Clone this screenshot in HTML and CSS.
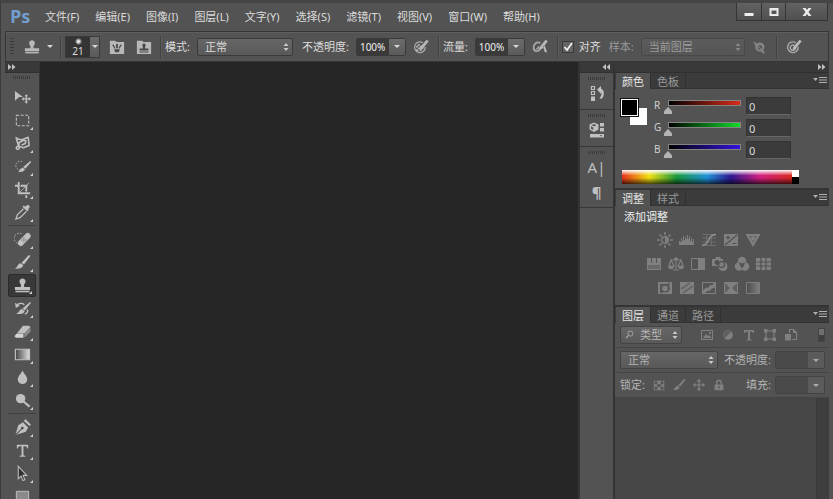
FILE: index.html
```
<!DOCTYPE html>
<html lang="zh-CN">
<head>
    <meta charset="UTF-8">
    <meta name="viewport" content="width=device-width, initial-scale=1.0">
    <title>Ps</title>
    <link rel="stylesheet" href="styles.css">
</head>
<body>
    <!-- shared icons -->
    <svg class="sprite" aria-hidden="true">
        <symbol id="stamp" viewBox="0 0 18 18">
            <path d="M9 1.500a3.200 3.200 0 0 1 2.400 5.400c-.8 1-.9 1.800-.6 3.600H17v3.200H1v-3.200h6.200c.3-1.800.2-2.600-.6-3.600A3.200 3.200 0 0 1 9 1.500z"/>
            <path d="M1.500 14.500h15v1.700h-15z"/>
        </symbol>
        <symbol id="brush" viewBox="0 0 18 18">
            <path d="M16.800 1.500c.5.400.4.900 0 1.400L10.500 11 8 9.200l7.200-7.500c.5-.5 1.100-.6 1.600-.2zM7.300 9.900l2.400 1.900c-.3 2.600-3.600 4-8.700 3.700 2.800-.9 2.800-5.300 6.300-5.600z"/>
        </symbol>
        <symbol id="move" viewBox="0 0 18 18">
            <path d="M9 1l3 3.500h-2.200v3.700h3.700V6L17 9l-3.500 3V9.800H9.800v3.700H12L9 17l-3-3.500h2.200V9.800H4.500V12L1 9l3.500-3v2.200h3.700V4.500H6z"/>
        </symbol>
        <symbol id="menu" viewBox="0 0 14 9">
            <path d="M0 2h5L2.500 5zM6 1h8v1H6zM6 3.500h8v1H6zM6 6h8v1H6z"/>
        </symbol>
        <symbol id="chevrons" viewBox="0 0 8 6">
            <path d="M0 0l3.500 3L0 6zM4 0l3.500 3L4 6z"/>
        </symbol>
    </svg>

    <div class="app">
        <header class="menubar">
            <span class="logo">Ps</span>
            <nav class="menus">
                <button class="menu">文件(F)</button>
                <button class="menu">编辑(E)</button>
                <button class="menu">图像(I)</button>
                <button class="menu">图层(L)</button>
                <button class="menu">文字(Y)</button>
                <button class="menu">选择(S)</button>
                <button class="menu">滤镜(T)</button>
                <button class="menu">视图(V)</button>
                <button class="menu">窗口(W)</button>
                <button class="menu">帮助(H)</button>
            </nav>
            <div class="window-buttons">
                <button class="win-btn" aria-label="最小化"><svg viewBox="0 0 12 12"><path d="M1.500 7h9v3h-9z"/></svg></button>
                <button class="win-btn" aria-label="最大化"><svg viewBox="0 0 12 12"><path fill-rule="evenodd" d="M1.500 2h9v8h-9zM3.500 4.500v3.500h5V4.500z"/></svg></button>
                <button class="win-btn close" aria-label="关闭"><svg viewBox="0 0 12 12"><path d="M1.500 2h3L6 4l1.500-2h3l-3 4 3 4h-3L6 8l-1.500 2h-3l3-4z"/></svg></button>
            </div>
        </header>

        <div class="options">
            <span class="grip-v"></span>
            <button class="opt-btn preset" aria-label="仿制图章">
                <svg class="icon"><use href="#stamp"/></svg>
                <span class="caret"></span>
            </button>
            <span class="divider"></span>
            <button class="brush-picker" aria-label="画笔">
                <span class="brush-preview"><span class="brush-dot"></span>21</span>
                <span class="drop"></span>
            </button>
            <button class="opt-btn" aria-label="画笔面板">
                <svg class="icon" viewBox="0 0 18 18"><path d="M1 2h6l1.500 1.500H17V17H1z"/><path class="ink" d="M3.500 6.500h2l1.800 4.200H6zM8 5.500h2v5H8zM12.500 6.500h2L12 10.700h-1.300zM6 11.500h6v1L11 15H7l-1-2.500z"/></svg>
            </button>
            <button class="opt-btn" aria-label="仿制源面板">
                <svg class="icon" viewBox="0 0 18 18"><path d="M1 2h6l1.500 1.500H17V17H1z"/><path class="ink" d="M9 5a2 2 0 0 1 1.300 3.400v2.300H14V13H4v-2.300h3.700V8.400A2 2 0 0 1 9 5zM4 14h10v1.200H4z"/></svg>
            </button>
            <span class="divider"></span>
            <label class="opt-label" for="mode">模式:</label>
            <select class="select mode" id="mode"><option>正常</option></select>
            <label class="opt-label opacity-label" for="opacity">不透明度:</label>
            <div class="combo">
                <input class="combo-input" id="opacity" type="text" value="100%">
                <button class="drop" aria-label="不透明度滑块"></button>
            </div>
            <button class="opt-btn" aria-label="不透明度压力">
                <svg class="icon" viewBox="0 0 18 18"><path fill="none" stroke="#a8a8a8" stroke-width="1.500" d="M11 4.200A6 6 0 1 0 13.800 9"/><path d="M3.500 7.500h2v2h-2zM5.500 9.500h2v2h-2zM7.500 11.500h2v2h-2zM5.500 5.500h2v2h-2zM3.500 11.500h2v2h-2zM7.500 7.500h2v2h-2zM9.500 9.500h2v2h-2z"/><path d="M15.300.8l2.400 1.800-7 8.600-3.400 1.300.8-3.600z"/></svg>
            </button>
            <span class="divider"></span>
            <label class="opt-label" for="flow">流量:</label>
            <div class="combo">
                <input class="combo-input" id="flow" type="text" value="100%">
                <button class="drop" aria-label="流量滑块"></button>
            </div>
            <button class="opt-btn" aria-label="喷枪">
                <svg class="icon" viewBox="0 0 18 18"><path fill="none" stroke="#a8a8a8" stroke-width="2" d="M9.500 4.500C5 2.500 1.500 6 1.800 10c.2 4 4.700 5 7.200 1.500l4-5M5 10.500c1 1 2-.5 3-2"/><path d="M15.300.8l2.400 1.800-6 8-4 2.400 1.300-4.500zM12 8l2.500 7h2.500l-2.500-7z"/></svg>
            </button>
            <span class="divider"></span>
            <input class="check" type="checkbox" id="aligned" checked>
            <label class="opt-label check-label" for="aligned">对齐</label>
            <label class="opt-label dim" for="sample">样本:</label>
            <select class="select sample" id="sample" disabled><option>当前图层</option></select>
            <button class="opt-btn faded" aria-label="忽略调整图层">
                <svg class="icon" viewBox="0 0 18 18"><path fill-rule="evenodd" d="M3 4l4 1a5 5 0 0 1 8 5l-1.500 3 2 2.500-1.500 1-3-2.500a5 5 0 0 1-6-6zM10 7a2.500 2.500 0 1 0 .1 5A2.500 2.500 0 0 0 10 7z"/><path stroke="#a8a8a8" stroke-width="1.300" d="M3 3l12 12"/></svg>
            </button>
            <span class="divider"></span>
            <button class="opt-btn" aria-label="大小压力">
                <svg class="icon" viewBox="0 0 18 18"><path fill="none" stroke="#a8a8a8" stroke-width="1.600" d="M11 4.200A6 6 0 1 0 13.800 9M9.500 7.300A3 3 0 1 0 10.800 10"/><path d="M15.300.8l2.400 1.800-7 8.600-3.400 1.300.8-3.600z"/></svg>
            </button>
        </div>

        <main class="workspace">
            <aside class="toolbar">
                <div class="dock-head"><svg class="chev"><use href="#chevrons"/></svg></div>
                <span class="grip-h"></span>
                <div class="tool-group">
                    <button class="tool single" aria-label="移动"><svg class="icon" viewBox="0 0 18 18"><path d="M1 2l8.500 6.500H5.500L1 12.500z"/><path d="M13 5.500l2 2.300h-1.300v2.100h2V8.500l2.300 2-2.300 2v-1.400h-2v2.100H15l-2 2.300-2-2.300h1.300v-2.100h-2v1.400l-2.300-2 2.300-2v1.400h2V7.800H11z"/></svg></button>
                    <button class="tool" aria-label="矩形选框"><svg class="icon" viewBox="0 0 18 18"><path fill="none" stroke="#c0c0c0" stroke-width="1.200" stroke-dasharray="3 1.700" d="M2.500 3.500h13v11h-13z"/></svg></button>
                    <button class="tool" aria-label="套索"><svg class="icon" viewBox="0 0 18 18"><path fill="none" stroke="#c0c0c0" stroke-width="1.700" stroke-linejoin="round" d="M1.500 2.500l3.500 2 3.500.5 6.500-2.500 1 8.500-6 2.500-5-1.500L2.500 4M5 12l.5-4 4.500-2.500 2.500.5-.5 3-4 1.500M5 12c-2.500-.5-3.500 2.500-1.500 3s2.500-1.500 1.500-3"/></svg></button>
                    <button class="tool" aria-label="快速选择"><svg class="icon" viewBox="0 0 18 18"><path fill="none" stroke="#c0c0c0" stroke-dasharray="1.500 1.500" d="M8.500 4a4.500 4.500 0 1 0-2 8.500"/><path d="M17.500 3l.5 1.500-6 7L9.800 9.500zM9 10l2.500 2c-.5 2.300-3 3.300-7.500 2.800 2-.6 2.500-4 5-4.800z"/></svg></button>
                    <button class="tool" aria-label="裁剪"><svg class="icon" viewBox="0 0 18 18"><path d="M4 1h2v11h11v2H4V6H1V4h3zM7 4h7v7h-2V6H7zM12 15h2v3h-2z"/><path fill="none" stroke="#c0c0c0" stroke-width=".8" d="M6 12L16 2"/></svg></button>
                    <button class="tool" aria-label="吸管"><svg class="icon" viewBox="0 0 18 18"><path d="M12 3c1.500-2 3-2.300 4-1.300s.7 2.500-1.200 4l.7.900-1.500 1.400-5-5 1.500-1.400z"/><path fill="none" stroke="#c0c0c0" stroke-width="1.300" d="M10 5l-6.500 6.500L2 16l4.500-1.500L13 8"/></svg></button>
                </div>
                <div class="tool-group">
                    <button class="tool" aria-label="修复画笔"><svg class="icon" viewBox="0 0 18 18"><path fill="none" stroke="#c0c0c0" stroke-dasharray="1.500 1.500" d="M8 2.800A5.500 5.500 0 1 0 3.500 13"/><path d="M12.500 3a3 3 0 0 1 4.200 4.300L9.200 15A3 3 0 0 1 5 10.700z"/><path class="ink" d="M10 7h1v1h-1zM12 9h1v1h-1zM8 9h1v1H8zM10 11h1v1h-1zM10 9h1v1h-1z"/></svg></button>
                    <button class="tool" aria-label="画笔"><svg class="icon"><use href="#brush"/></svg></button>
                    <button class="tool active" aria-label="仿制图章"><svg class="icon"><use href="#stamp"/></svg></button>
                    <button class="tool" aria-label="历史记录画笔"><svg class="icon" viewBox="0 0 18 18"><path d="M17 2l1 1-6.500 8L9 9zM8.500 9.500l2.800 2.300c-.5 2.500-4 3.500-9.300 3 3-.8 3.500-4.800 6.500-5.300z"/><path fill="none" stroke="#c0c0c0" stroke-width="1.500" d="M3 5.500c2-2 5.500-2.500 8-.5M14 10c1 1 .5 4-2.500 5"/><path d="M1 3l1 5.500L6 6z"/></svg></button>
                    <button class="tool" aria-label="橡皮擦"><svg class="icon" viewBox="0 0 18 18"><path d="M9.500 3H16l1.500 1.500-6.500 6.500H3z"/><path fill="#8e8e8e" d="M17.500 5v4L11 15.500v-4z"/><path fill="#d4d4d4" d="M2.500 11.500H10v4H2l-1.500-1.500z"/></svg></button>
                    <button class="tool" aria-label="渐变"><svg class="icon" viewBox="0 0 18 18"><defs><linearGradient id="grad"><stop stop-color="#444"/><stop offset="1" stop-color="#e0e0e0"/></linearGradient></defs><path fill="url(#grad)" stroke="#c0c0c0" stroke-width="1.200" d="M1.500 3.500h15v11h-15z"/></svg></button>
                    <button class="tool" aria-label="模糊"><svg class="icon" viewBox="0 0 18 18"><path d="M9 1.500c1 3 5 5.700 5 9.500a5 5 0 0 1-10 0c0-3.800 4-6.500 5-9.500z"/></svg></button>
                    <button class="tool" aria-label="减淡"><svg class="icon" viewBox="0 0 18 18"><circle cx="7" cy="7" r="5"/><path stroke="#c0c0c0" stroke-width="2.200" d="M9.500 9.500L16.500 15.500"/></svg></button>
                </div>
                <div class="tool-group">
                    <button class="tool" aria-label="钢笔"><svg class="icon" viewBox="0 0 18 18"><path d="M12 0l6 6-1.600 1.500L10.500 2z"/><path d="M9.500 3.500l5.500 5.500-2.500 4.500L1.500 17l3-10.500z"/><path fill="none" stroke="#535353" stroke-width="1.100" d="M1.500 17l6.500-6.500"/><circle class="ink" cx="8.800" cy="9.600" r="1.400"/></svg></button>
                    <button class="tool" aria-label="文字"><svg class="icon" viewBox="0 0 18 18"><path d="M3 3h12v4h-1c0-2-1-2.500-4-2.500v9c0 1 .5 1 2 1v1H6v-1c1.500 0 2 0 2-1v-9c-3 0-4 .5-4 2.500H3z"/></svg></button>
                    <button class="tool" aria-label="路径选择"><svg class="icon" viewBox="0 0 18 18"><path fill="#303030" stroke="#c0c0c0" stroke-width="1.100" d="M4.500 1.500v13l3-2.800 2 4.800 2-1-2-4.500h4z"/></svg></button>
                    <button class="tool" aria-label="矩形"><svg class="icon" viewBox="0 0 18 18"><path fill="#8a8a8a" stroke="#c0c0c0" d="M2.500 3.500h13v10h-13z"/></svg></button>
                </div>
            </aside>

            <section class="canvas"></section>

            <aside class="dock">
                <div class="dock-head end"><svg class="chev flip"><use href="#chevrons"/></svg></div>
                <div class="dock-group">
                    <span class="grip-h"></span>
                    <button class="dock-btn" aria-label="历史记录"><svg class="icon" viewBox="0 0 18 18"><path fill="none" stroke="#c0c0c0" stroke-width="1.200" d="M3.500 2.500h3v3h-3zM3.500 7.500h3v3h-3z"/><path d="M3 12.500h4V17H3zM9 5.500L13 2v2.500c4 2 3.500 7.500.5 10.500l-2-1c2-2 2.500-4.500 1.500-6v2z"/></svg></button>
                </div>
                <div class="dock-group">
                    <span class="grip-h"></span>
                    <button class="dock-btn" aria-label="属性"><svg class="icon" viewBox="0 0 18 18"><path fill-rule="evenodd" d="M6 1.500l4.500 2v5L6 11 1.500 8.500v-5zM6 3L3.500 4.200 6 5.300l2.500-1.100zM3 5.300v2.400l2.300 1.200V6.400z"/><path d="M12 2h4v3.500h-4zM12 7h4v3.500h-4zM2 13h14v3.500H2z"/><path class="ink" d="M12 14h2l-1 1.500z"/></svg></button>
                </div>
                <div class="dock-group">
                    <span class="grip-h"></span>
                    <button class="dock-btn char" aria-label="字符">A|</button>
                    <button class="dock-btn para" aria-label="段落">¶</button>
                </div>
            </aside>

            <aside class="panels">
                <div class="dock-head end"><svg class="chev"><use href="#chevrons"/></svg></div>

                <section class="panel color">
                    <div class="tabs">
                        <button class="tab active">颜色</button>
                        <button class="tab">色板</button>
                        <button class="panel-menu" aria-label="面板菜单"><svg><use href="#menu"/></svg></button>
                    </div>
                    <div class="color-body">
                        <div class="swatches">
                            <button class="swatch back" aria-label="背景色"></button>
                            <button class="swatch front" aria-label="前景色"></button>
                        </div>
                        <div class="channels">
                            <div class="channel">
                                <label for="red">R</label>
                                <input class="slider red" type="range" max="255" value="0" aria-label="R">
                                <input class="value" id="red" type="text" value="0">
                            </div>
                            <div class="channel">
                                <label for="green">G</label>
                                <input class="slider green" type="range" max="255" value="0" aria-label="G">
                                <input class="value" id="green" type="text" value="0">
                            </div>
                            <div class="channel">
                                <label for="blue">B</label>
                                <input class="slider blue" type="range" max="255" value="0" aria-label="B">
                                <input class="value" id="blue" type="text" value="0">
                            </div>
                        </div>
                    </div>
                    <div class="ramp"><span class="spectrum"></span><span class="mono"></span></div>
                </section>

                <section class="panel adjust">
                    <div class="tabs">
                        <button class="tab active">调整</button>
                        <button class="tab">样式</button>
                        <button class="panel-menu" aria-label="面板菜单"><svg><use href="#menu"/></svg></button>
                    </div>
                    <p class="adjust-title">添加调整</p>
                    <div class="adjust-row">
                        <button class="mini" aria-label="亮度/对比度"><svg viewBox="0 0 16 16"><circle cx="8" cy="8" r="3.300" fill="none" stroke="#808080" stroke-width="1.400"/><path d="M8 5v6a3 3 0 0 0 0-6z"/><path stroke="#808080" stroke-width="1.500" d="M8 0v3M8 13v3M0 8h3M13 8h3M2.500 2.500l2 2M11.500 11.500l2 2M2.500 13.500l2-2M11.500 4.500l2-2"/></svg></button>
                        <button class="mini" aria-label="色阶"><svg viewBox="0 0 16 16"><path d="M0 13V9h1v1h1V6h1v3h1V4h1v4h1V5h1v2h1V3h1v4h1V4h1v5h1V6h1v4h1V7h1v6z"/></svg></button>
                        <button class="mini" aria-label="曲线"><svg viewBox="0 0 16 16"><path fill="none" stroke="#747474" stroke-width=".8" d="M1 2.500h14M1 6h14M1 10h14M1 13.500h14M5.500 2v12M10.500 2v12"/><path fill="none" stroke="#929292" stroke-width="1.500" d="M1 13.500c8 0 5-11 14-11"/></svg></button>
                        <button class="mini" aria-label="曝光度"><svg viewBox="0 0 16 16"><path d="M1 2h14v12H1z"/><path class="cut" fill="none" d="M2 13L14 3M3 5.500h4M5 3.500v4M9.500 11.500h4"/></svg></button>
                        <button class="mini" aria-label="自然饱和度"><svg viewBox="0 0 16 16"><path d="M.5 2h15L8 15z"/><path fill="#686868" d="M4 4h8l-4 7z"/><circle cx="8" cy="6.500" r="2"/></svg></button>
                    </div>
                    <div class="adjust-row">
                        <button class="mini" aria-label="色相/饱和度"><svg viewBox="0 0 16 16"><path d="M1 2h4v5h1V2h4v5h1V2h4v12H1z"/><path fill="#6a6a6a" d="M2 9h12v4H2z"/></svg></button>
                        <button class="mini" aria-label="色彩平衡"><svg viewBox="0 0 16 16"><path fill="none" stroke="#808080" stroke-width="1.200" d="M8 1v13M3 4h10M3 4L1 10h5zM13 4l-3 6h5zM5 14h6"/><path d="M0 10h6l-1 3H1zM10 10h6l-1 3h-4zM6 2h4v2H6z"/></svg></button>
                        <button class="mini" aria-label="黑白"><svg viewBox="0 0 16 16"><path fill="none" stroke="#808080" d="M1.500 2.500h13v11h-13z"/><path d="M8 2h7v12H8z"/></svg></button>
                        <button class="mini" aria-label="照片滤镜"><svg viewBox="0 0 16 16"><path fill-rule="evenodd" d="M0 3h3l1-2h4l1 2h2v2a5 5 0 0 0-4 5H0zM5 4a2.500 2.500 0 1 0 .1 5A2.500 2.500 0 0 0 5 4z"/><circle cx="11" cy="10.500" r="4.500"/><circle class="cut" fill="none" cx="9.500" cy="8.500" r="3"/></svg></button>
                        <button class="mini" aria-label="通道混合器"><svg viewBox="0 0 16 16"><circle cx="8" cy="5" r="4.200"/><circle cx="5" cy="10.500" r="4.200"/><circle cx="11" cy="10.500" r="4.200"/><path fill="#535353" d="M5 6.500l3 1 3-1-1 3-2 3-2-3z"/></svg></button>
                        <button class="mini" aria-label="颜色查找"><svg viewBox="0 0 16 16"><path d="M0 2h15v12H0z"/><path class="cut" d="M5 2v12M10 2v12M1 6h14M1 10h14"/></svg></button>
                    </div>
                    <div class="adjust-row">
                        <button class="mini" aria-label="反相"><svg viewBox="0 0 16 16"><path d="M1 2h14v12H1z"/><path fill="#555" d="M3 4h7l3-1.500L12 6a4 4 0 0 1-5 6l-2 1H3z"/><circle cx="8" cy="8.500" r="2.800"/></svg></button>
                        <button class="mini" aria-label="色调分离"><svg viewBox="0 0 16 16"><path d="M1 2h14v12H1z"/><path fill="none" stroke="#666" stroke-width="2" d="M2 9l9-6M4 13l10-7"/></svg></button>
                        <button class="mini" aria-label="阈值"><svg viewBox="0 0 16 16"><path d="M1 2h14v12H1z"/><path fill="#555" d="M2 3h11l-2 2.500-2-.5-2 3-2-.5-3 3zM14 7v6H4l3-2.500 2 .5 2-3 1 .5z"/></svg></button>
                        <button class="mini" aria-label="可选颜色"><svg viewBox="0 0 16 16"><path d="M1 2h14v12H1z"/><path fill="#606060" d="M2 3l5 5-5 5zM14 3L9 8l5 5z"/></svg></button>
                        <button class="mini" aria-label="渐变映射"><svg viewBox="0 0 16 16"><defs><linearGradient id="map"><stop stop-color="#4c4c4c"/><stop offset="1" stop-color="#808080"/></linearGradient></defs><path fill="url(#map)" stroke="#7c7c7c" d="M1.500 2.500h13v11h-13z"/></svg></button>
                    </div>
                </section>

                <section class="panel layers">
                    <div class="tabs">
                        <button class="tab active">图层</button>
                        <button class="tab">通道</button>
                        <button class="tab">路径</button>
                        <button class="panel-menu" aria-label="面板菜单"><svg><use href="#menu"/></svg></button>
                    </div>
                    <div class="layer-row">
                        <div class="filter">
                            <svg class="search" viewBox="0 0 10 10"><circle cx="6" cy="4" r="2.800" fill="none" stroke="#aaa"/><path stroke="#aaa" stroke-width="1.300" d="M4 6L1 9"/></svg>
                            <select class="select kind" aria-label="过滤类型"><option>类型</option></select>
                        </div>
                        <div class="filter-icons">
                            <button class="mini" aria-label="像素图层"><svg viewBox="0 0 16 16"><path fill-rule="evenodd" d="M2 3h12v10H2zM3 4v8h10V4z"/><path d="M4 11l3-4 2 2 1-1 3 3zM10 5h2v2h-2z"/></svg></button>
                            <button class="mini" aria-label="调整图层"><svg viewBox="0 0 16 16"><circle cx="8" cy="8" r="4.800"/><path fill="#606060" d="M4.800 11.200a4.500 4.500 0 0 1 6.400-6.400z"/></svg></button>
                            <button class="mini" aria-label="文字图层"><svg viewBox="0 0 16 16"><path d="M3 3h10v3h-1c0-1-.5-1.500-3-1.500v7c0 1 .5 1 1.500 1v1h-5v-1c1 0 1.500 0 1.500-1v-7C4.500 4.500 4 5 4 6H3z"/></svg></button>
                            <button class="mini" aria-label="形状图层"><svg viewBox="0 0 16 16"><path fill="none" stroke="#808080" stroke-width="1.200" d="M4 4h8v8H4z"/><path d="M2 2h3.500v3.500H2zM10.500 2H14v3.500h-3.500zM2 10.500h3.500V14H2zM10.500 10.500H14V14h-3.500z"/></svg></button>
                            <button class="mini" aria-label="智能对象"><svg viewBox="0 0 16 16"><path fill="none" stroke="#808080" stroke-width="1.200" d="M6.500 6V2.500h4l3 3v7H9"/><path d="M2 7h6v6.500H2zM10 2v4h4z"/></svg></button>
                        </div>
                        <button class="toggle" aria-label="过滤开关"></button>
                    </div>
                    <div class="layer-row">
                        <select class="select blend" aria-label="混合模式"><option>正常</option></select>
                        <label class="row-label" for="layer-opacity">不透明度:</label>
                        <div class="combo dim">
                            <input class="combo-input" id="layer-opacity" type="text">
                            <button class="drop" aria-label="不透明度滑块"></button>
                        </div>
                    </div>
                    <div class="layer-row">
                        <span class="lock-label">锁定:</span>
                        <div class="locks">
                            <button class="mini" aria-label="锁定透明像素"><svg viewBox="0 0 16 16"><path fill-rule="evenodd" d="M2 3h12v11H2zM3 4v3h3V4zM10 4v3h3V4zM6 7v3h4V7zM3 10v3h3v-3zM10 10v3h3v-3z"/></svg></button>
                            <button class="mini" aria-label="锁定图像像素"><svg><use href="#brush"/></svg></button>
                            <button class="mini" aria-label="锁定位置"><svg><use href="#move"/></svg></button>
                            <button class="mini" aria-label="锁定全部"><svg viewBox="0 0 16 16"><path fill="none" stroke="#808080" stroke-width="1.600" d="M5.300 8V5.500a2.700 2.700 0 0 1 5.400 0V8"/><path d="M3 7.500h10V14H3z"/><path fill="#535353" d="M7.300 9.500h1.400v2.500H7.300z"/></svg></button>
                        </div>
                        <label class="row-label" for="fill">填充:</label>
                        <div class="combo dim">
                            <input class="combo-input" id="fill" type="text">
                            <button class="drop" aria-label="填充滑块"></button>
                        </div>
                    </div>
                    <div class="layer-list"><span class="scroll-track"></span></div>
                </section>
            </aside>
        </main>
    </div>
</body>
</html>
```

FILE: styles.css
```
* {
    margin: 0;
    padding: 0;
    box-sizing: border-box;
}

body {
    font-family: "Noto Sans", "Noto Sans CJK SC", sans-serif;
    font-size: 11px;
    line-height: 16px;
    color: #dcdcdc;
    background: #535353;
    overflow: hidden;
}

button,
input,
select {
    font: inherit;
    color: inherit;
    background: none;
    border: none;
    border-radius: 0;
    outline: none;
    appearance: none;
}

svg {
    display: block;
}

.sprite {
    display: none;
}

.app {
    display: flex;
    flex-direction: column;
    height: 100vh;
    border-top: 3px solid #454545;
    border-left: 1px solid #3c3c3c;
}

.icon {
    width: 18px;
    height: 18px;
    fill: #c0c0c0;
    flex-shrink: 0;
}

.ink {
    fill: #484848;
}

/* menu bar */
.menubar {
    display: flex;
    align-items: flex-start;
    height: 28px;
    padding: 0 5px 0 9px;
    flex-shrink: 0;
}

.logo {
    width: 35px;
    font-family: "Open Sans", sans-serif;
    font-size: 18px;
    font-weight: bold;
    line-height: 26px;
    color: #729dcf;
}

.menus {
    display: flex;
    gap: 16px;
    padding-top: 6px;
}

.menu {
    white-space: nowrap;
}

.window-buttons {
    display: flex;
    margin-left: auto;
    border: 1px solid #343434;
    border-top: none;
}

.win-btn {
    display: flex;
    align-items: center;
    justify-content: center;
    width: 24px;
    height: 17px;
    background: linear-gradient(#626262, #505050);
    border-left: 1px solid #343434;
}

.win-btn:first-child {
    border-left: none;
}

.win-btn.close {
    width: 42px;
}

.win-btn svg {
    width: 12px;
    height: 12px;
    fill: #ececec;
}

/* options bar */
.options {
    display: flex;
    align-items: center;
    height: 31px;
    margin: 0 4px;
    padding-left: 4px;
    background: #535353;
    border: 1px solid #363636;
    box-shadow: inset 0 1px #5f5f5f;
    flex-shrink: 0;
}

.grip-v {
    width: 4px;
    height: 18px;
    margin-right: 10px;
    background: repeating-linear-gradient(#3b3b3b 0 1px, transparent 1px 3px);
}

.opt-btn {
    display: flex;
    align-items: center;
    justify-content: center;
    width: 27px;
    height: 20px;
}

.opt-btn .icon {
    width: 16px;
    height: 16px;
    fill: #b8b8b8;
}

.opt-btn.preset {
    width: 33px;
    justify-content: flex-start;
    gap: 7px;
}

.opt-btn.faded {
    opacity: 0.5;
    width: 28px;
}

.caret {
    border: 3px solid transparent;
    border-top-color: #d8d8d8;
    border-bottom: none;
}

.divider {
    width: 2px;
    height: 22px;
    margin: 0 3px;
    border-left: 1px solid #434343;
    border-right: 1px solid #5c5c5c;
}

.brush-picker {
    display: flex;
    width: 35px;
    height: 22px;
    margin-right: 3px;
    border: 1px solid #3a3a3a;
}

.brush-preview {
    display: flex;
    flex-direction: column;
    align-items: center;
    width: 24px;
    padding-top: 1px;
    background: #343434;
    font-size: 10px;
    line-height: 12px;
}

.brush-dot {
    width: 7px;
    height: 7px;
    border-radius: 50%;
    background: radial-gradient(#fff 10%, #343434 75%);
    flex-shrink: 0;
}

.brush-picker .drop {
    width: 9px;
}

.opt-label {
    white-space: nowrap;
    margin-right: 7px;
}

.opt-label.dim {
    color: #999;
}

.opacity-label {
    margin-left: 9px;
}

.select {
    height: 18px;
    padding: 0 16px 0 7px;
    line-height: 16px;
    border: 1px solid #3a3a3a;
    border-radius: 2px;
    background: url("data:image/svg+xml,%3Csvg xmlns='http://www.w3.org/2000/svg' width='6' height='8'%3E%3Cpath fill='%23c8c8c8' d='M3 0l2.500 3h-5zM3 8L.500 5h5z'/%3E%3C/svg%3E") no-repeat right 3px center, linear-gradient(#666, #595959);
}

.select:disabled {
    color: #9d9d9d;
    opacity: 1;
    border-color: #484848;
    background-image: url("data:image/svg+xml,%3Csvg xmlns='http://www.w3.org/2000/svg' width='6' height='8'%3E%3Cpath fill='%23888' d='M3 0l2.500 3h-5zM3 8L.500 5h5z'/%3E%3C/svg%3E"), linear-gradient(#5b5b5b, #555);
}

.select.mode {
    width: 96px;
}

.select.sample {
    width: 104px;
}

.combo {
    display: flex;
    width: 50px;
    height: 18px;
    margin-right: 2px;
    border: 1px solid #3a3a3a;
    border-radius: 2px;
    flex-shrink: 0;
}

.combo-input {
    flex: 1;
    min-width: 0;
    padding-left: 3px;
    font-size: 10px;
    background: #3a3a3a;
    color: #f0f0f0;
}

.drop {
    display: flex;
    align-items: center;
    justify-content: center;
    width: 16px;
    background: linear-gradient(#6c6c6c, #5a5a5a);
}

.drop::after {
    content: "";
    border: 3px solid transparent;
    border-top-color: #d8d8d8;
    border-bottom: none;
}

.combo.dim {
    margin-right: 0;
    border-color: #434343;
}

.combo.dim .combo-input {
    background: #4a4a4a;
}

.combo.dim .drop {
    background: #5b5b5b;
}

.combo.dim .drop::after {
    border-top-color: #aaa;
}

.check {
    width: 12px;
    height: 12px;
    border: 1px solid #383838;
    background: #646464;
}

.check:checked {
    background: url("data:image/svg+xml,%3Csvg xmlns='http://www.w3.org/2000/svg' viewBox='0 0 10 10'%3E%3Cpath fill='none' stroke='%23eee' stroke-width='1.800' d='M1.500 5l2.500 3L9 1'/%3E%3C/svg%3E") center / 10px no-repeat #646464;
}

.check-label {
    margin: 0 8px 0 5px;
}

/* workspace */
.workspace {
    display: flex;
    flex: 1;
    min-height: 0;
    margin: 0 4px;
    background: #343434;
}

.dock-head {
    display: flex;
    align-items: center;
    height: 11px;
    padding: 0 3px;
    background: #393939;
    border-bottom: 1px solid #303030;
    flex-shrink: 0;
}

.dock-head.end {
    justify-content: flex-end;
}

.chev {
    width: 8px;
    height: 6px;
    fill: #c0c0c0;
}

.chev.flip {
    transform: scaleX(-1);
}

.grip-h {
    display: block;
    width: 18px;
    height: 3px;
    background: repeating-linear-gradient(90deg, #3b3b3b 0 1px, transparent 1px 2px);
}

.toolbar {
    display: flex;
    flex-direction: column;
    align-items: center;
    width: 34px;
    margin-right: 1px;
    background: #535353;
    overflow: hidden;
}

.toolbar .dock-head {
    width: 100%;
}

.toolbar .grip-h {
    margin: 3px 0 6px;
    flex-shrink: 0;
}

.tool-group {
    padding: 2px 0 1px;
    border-top: 1px solid #424242;
    flex-shrink: 0;
}

.grip-h + .tool-group {
    padding-top: 0;
    border-top-color: transparent;
}

.tool {
    position: relative;
    display: flex;
    align-items: center;
    justify-content: center;
    width: 28px;
    height: 23px;
}

.tool .icon {
    width: 17px;
    height: 17px;
}

.tool::after {
    content: "";
    position: absolute;
    right: 3px;
    bottom: 2px;
    border-left: 3px solid transparent;
    border-bottom: 3px solid #d0d0d0;
}

.tool.single::after {
    display: none;
}

.tool.active {
    background: #383838;
    border: 1px solid #2c2c2c;
    border-radius: 2px;
}

.canvas {
    flex: 1;
    background: #262626;
}

.dock {
    display: flex;
    flex-direction: column;
    width: 33px;
    margin: 0 2px;
    background: #535353;
}

.dock-group {
    display: flex;
    flex-direction: column;
    align-items: center;
    padding: 4px 0 3px;
    border-bottom: 1px solid #383838;
}

.dock-btn {
    display: flex;
    align-items: center;
    justify-content: center;
    width: 28px;
    height: 26px;
    color: #c0c0c0;
}

.dock-btn.char {
    height: 25px;
    font-size: 15px;
}

.dock-btn.para {
    height: 25px;
    font-size: 15px;
    font-weight: bold;
}

/* panels */
.panels {
    display: flex;
    flex-direction: column;
    width: 214px;
    background: #343434;
}

.panel {
    display: flex;
    flex-direction: column;
    margin-bottom: 2px;
    background: #535353;
}

.tabs {
    display: flex;
    height: 16px;
    padding-left: 1px;
    background: #3b3b3b;
    border-bottom: 1px solid #333;
}

.tab {
    width: 35px;
    height: 16px;
    line-height: 15px;
    color: #999;
    border-right: 1px solid #303030;
}

.tab.active {
    background: #535353;
    color: #e6e6e6;
}

.panel-menu {
    margin-left: auto;
    padding-right: 2px;
}

.panel-menu svg {
    width: 14px;
    height: 9px;
    fill: #b0b0b0;
}

.color {
    height: 115px;
}

.color-body {
    display: flex;
    padding: 8px 0 0 6px;
}

.swatches {
    position: relative;
    width: 33px;
    height: 28px;
}

.swatch {
    position: absolute;
    width: 17px;
    height: 17px;
}

.swatch.back {
    top: 11px;
    left: 9px;
    background: #fff;
}

.swatch.front {
    top: 2px;
    left: 0;
    background: #000;
    border: 1px solid #fff;
    outline: 1px solid #111;
}

.channels {
    display: flex;
    flex-direction: column;
    gap: 4px;
}

.channel {
    display: flex;
    height: 18px;
}

.channel label {
    width: 14px;
    font-size: 10px;
    color: #d0d0d0;
}

.slider {
    width: 73px;
    height: 18px;
    margin-right: 5px;
    background: linear-gradient(90deg, #000, #d82c1a) 1px 4px / 71px 4px no-repeat, linear-gradient(#858585, #858585) 0 3px / 100% 6px no-repeat;
}

.slider.green {
    background-image: linear-gradient(90deg, #000, #12dc2a), linear-gradient(#858585, #858585);
}

.slider.blue {
    background-image: linear-gradient(90deg, #000, #3512e0), linear-gradient(#858585, #858585);
}

/* let the thumb centre on both ends of the bar */
.slider::-webkit-slider-runnable-track {
    margin: 0 -4px;
}

.slider::-webkit-slider-thumb {
    appearance: none;
    width: 8px;
    height: 7px;
    margin-top: 9px;
    background: #b4b4b4;
    clip-path: polygon(50% 0, 100% 60%, 100% 100%, 0 100%, 0 60%);
}

.value {
    width: 45px;
    height: 18px;
    padding-left: 2px;
    background: #3b3b3b;
    border: 1px solid #333;
    border-bottom-color: #666;
}

.ramp {
    display: flex;
    width: 177px;
    height: 14px;
    margin: 11px 0 0 7px;
}

.spectrum {
    flex: 1;
    background: linear-gradient(#fff 0, rgba(255, 255, 255, 0) 40%, rgba(0, 0, 0, 0) 55%, rgba(0, 0, 0, 0.7)), linear-gradient(90deg, #e83018, #f0e010 16%, #18983a 32%, #2090d8 50%, #2c1890 64%, #d02080 81%, #d82820);
}

.mono {
    width: 7px;
    background: linear-gradient(#fff 50%, #000 50%);
}

.adjust {
    height: 115px;
}

.adjust-title {
    padding: 3px 0 7px 9px;
    color: #f0f0f0;
}

.adjust-row {
    display: flex;
    justify-content: center;
    gap: 6px;
    padding: 0 26px 8px 0;
}

.mini,
.mini svg {
    width: 16px;
    height: 16px;
    fill: #808080;
    flex-shrink: 0;
}

.cut {
    stroke: #505050;
    stroke-width: 1.2;
}

.layers {
    flex: 1;
    min-height: 0;
    margin-bottom: 0;
}

.layer-row {
    display: flex;
    align-items: center;
    height: 25px;
    padding: 0 4px 0 5px;
    border-bottom: 1px solid #454545;
    flex-shrink: 0;
}

.layer-row .select,
.row-label,
.lock-label {
    color: #b4b4b4;
}

.layer-row .select {
    border-color: #434343;
}

.filter {
    position: relative;
}

.search {
    position: absolute;
    top: 4px;
    left: 5px;
    width: 9px;
    height: 9px;
}

.select.kind {
    width: 62px;
    padding-left: 19px;
}

.select.blend {
    width: 98px;
}

.filter-icons {
    display: flex;
    gap: 5px;
    margin: 0 auto 0 17px;
}

.toggle {
    width: 7px;
    height: 14px;
    background: linear-gradient(#707070 50%, #3f3f3f 50%);
    border: 1px solid #444;
}

.row-label {
    margin: 0 4px 0 auto;
}

.locks {
    display: flex;
    gap: 4px;
    margin-left: 7px;
}

.locks .mini svg {
    width: 14px;
    height: 16px;
}

.layer-list {
    display: flex;
    justify-content: flex-end;
    flex: 1;
    background: #464646;
}

.scroll-track {
    width: 13px;
    background: #3e3e3e;
    border-left: 1px solid #383838;
}
```
